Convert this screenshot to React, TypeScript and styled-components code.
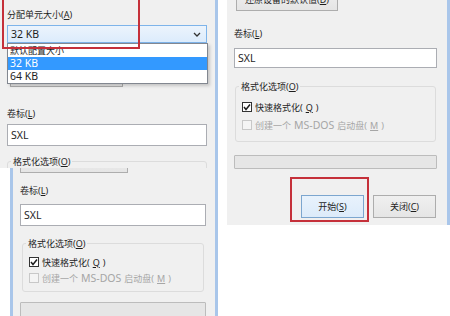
import React from 'react';
import styled, { createGlobalStyle } from 'styled-components';

const GlobalStyle = createGlobalStyle`
  html, body {
    margin: 0;
    padding: 0;
    background: #ffffff;
  }
  body {
    font-family: "Noto Sans", "Noto Sans CJK SC", sans-serif;
    font-size: 9px;
    color: #1e1e1e;
  }
`;

const frame = '#a9c6ea';

const Canvas = styled.div`
  display: flex;
  align-items: flex-start;
  width: 450px;
  height: 316px;
  overflow: hidden;
  background: #ffffff;
`;

const LeftColumn = styled.div`
  display: flex;
  flex-direction: column;
  width: 218px;
  height: 316px;
`;

const Pane = styled.div`
  position: relative;
  display: flex;
  flex-direction: column;
  box-sizing: border-box;
  overflow: hidden;
  background: #f0f0f0;

  & > * {
    flex-shrink: 0;
  }
`;

const TopPane = styled(Pane)`
  height: 168px;
  flex-shrink: 0;
  padding: 0 8px 0 7px;
  border-right: 3px solid ${frame};
`;

const LowerPane = styled(Pane)`
  flex: 1;
  margin-left: 10px;
  padding: 0 9px 0 7px;
  border-left: 3px solid ${frame};
  border-right: 3px solid ${frame};
`;

const RightPane = styled(Pane)`
  width: 223px;
  height: 225px;
  margin-left: 9px;
  padding: 0 10px 0 7px;
  border-right: 3px solid ${frame};
`;

/* Latin runs are drawn a little larger than the CJK ones, as in the dialog */
const Lat = styled.span`
  font-size: 10.5px;
`;

const Caption = styled.div<{ $mt: number }>`
  margin-top: ${p => p.$mt}px;
  line-height: 13px;
  white-space: nowrap;
`;

const Combo = styled.div<{ $mt: number }>`
  display: flex;
  align-items: center;
  justify-content: space-between;
  box-sizing: border-box;
  height: 18px;
  margin-top: ${p => p.$mt}px;
  padding: 0 5px 0 3px;
  border: 1px solid #7eb4ea;
  background: linear-gradient(#ecf4fc, #dcecfc);
`;

const DropList = styled.ul`
  position: absolute;
  top: 43px;
  left: 7px;
  right: 7px;
  margin: 0;
  padding: 0;
  list-style: none;
  border: 1px solid #828790;
  background: #ffffff;
  box-shadow: 2px 2px 3px rgba(0, 0, 0, 0.18);
`;

const DropItem = styled.li<{ $active?: boolean }>`
  height: 13px;
  line-height: 13px;
  padding-left: 2px;
  color: ${p => (p.$active ? '#ffffff' : '#1e1e1e')};
  background: ${p => (p.$active ? '#3399ff' : 'transparent')};
`;

const PushButton = styled.div<{ $mt?: number; $ml?: number; $w: number; $primary?: boolean }>`
  display: flex;
  align-items: center;
  justify-content: center;
  box-sizing: border-box;
  flex-shrink: 0;
  width: ${p => p.$w}px;
  height: 23px;
  margin-top: ${p => p.$mt ?? 0}px;
  margin-left: ${p => p.$ml ?? 0}px;
  border: 1px solid ${p => (p.$primary ? '#7ca6cf' : '#adadad')};
  background: ${p => (p.$primary ? 'linear-gradient(#e8f2fc, #dcebfa)' : 'linear-gradient(#f0f0f0, #e5e5e5)')};
  white-space: nowrap;
`;

const TextField = styled.div<{ $mt: number; $h: number }>`
  display: flex;
  align-items: center;
  box-sizing: border-box;
  height: ${p => p.$h}px;
  margin-top: ${p => p.$mt}px;
  padding-left: 3px;
  border: 1px solid #abadb3;
  background: #ffffff;
`;

const Group = styled.fieldset<{ $mt: number; $inset?: number; $gap: number; $pt: number; $pb: number }>`
  display: flex;
  flex-direction: column;
  gap: ${p => p.$gap}px;
  margin: ${p => p.$mt}px ${p => p.$inset ?? 0}px 0;
  padding: ${p => p.$pt}px 6px ${p => p.$pb}px;
  border: 1px solid #dcdcdc;
  border-radius: 3px;
  min-width: 0;
`;

const Legend = styled.legend`
  margin-left: -3px;
  padding: 0 2px;
  line-height: 13px;
  white-space: nowrap;
`;

const CheckRow = styled.div<{ $off?: boolean }>`
  display: flex;
  align-items: center;
  gap: 3px;
  height: 14px;
  white-space: nowrap;
  color: ${p => (p.$off ? '#a6a6a6' : '#1e1e1e')};
`;

const Box = styled.span<{ $off?: boolean }>`
  display: flex;
  align-items: center;
  justify-content: center;
  box-sizing: border-box;
  width: 10px;
  height: 10px;
  border: 1px solid ${p => (p.$off ? '#c8c8c8' : '#333333')};
  background: ${p => (p.$off ? '#f4f4f4' : '#ffffff')};
`;

const Progress = styled.div<{ $mt: number; $h: number }>`
  height: ${p => p.$h}px;
  margin-top: ${p => p.$mt}px;
  border: 1px solid #bcbcbc;
  border-radius: 1px;
  background: #e6e6e6;
`;

const ButtonRow = styled.div<{ $mt: number }>`
  display: flex;
  justify-content: flex-end;
  gap: 9px;
  margin-top: ${p => p.$mt}px;
  padding-right: 1px;
`;

const Spot = styled.div<{ $x: number; $y: number; $w: number; $h: number }>`
  position: absolute;
  left: ${p => p.$x}px;
  top: ${p => p.$y}px;
  width: ${p => p.$w}px;
  height: ${p => p.$h}px;
  box-sizing: border-box;
  border: 2px solid #c5303a;
  pointer-events: none;
`;

function Chevron() {
  return (
    <svg width="8" height="5" viewBox="0 0 8 5">
      <polyline points="1,1 4,4 7,1" fill="none" stroke="#333" strokeWidth="1.3" />
    </svg>
  );
}

function Tick() {
  return (
    <svg width="8" height="8" viewBox="0 0 8 8">
      <polyline points="1,4 3,6.5 7,1.5" fill="none" stroke="#1e1e1e" strokeWidth="1.5" />
    </svg>
  );
}

interface OptionsProps {
  mt: number;
  inset?: number;
  gap?: number;
  pt?: number;
  pb?: number;
}

function Options({ mt, inset, gap = 4, pt = 7, pb = 9 }: OptionsProps) {
  return (
    <Group $mt={mt} $inset={inset} $gap={gap} $pt={pt} $pb={pb}>
      <Legend>格式化选项(<u>O</u>)</Legend>
      <CheckRow>
        <Box><Tick /></Box>
        快速格式化(<u>Q</u>)
      </CheckRow>
      <CheckRow $off>
        <Box $off />
        创建一个 <Lat>MS-DOS</Lat> 启动盘(<u>M</u>)
      </CheckRow>
    </Group>
  );
}

export default function App() {
  return (
    <Canvas>
      <GlobalStyle />
      <LeftColumn>
        <TopPane>
          <Caption $mt={8}>分配单元大小(<u>A</u>)</Caption>
          <Combo $mt={4}>
            <Lat>32 KB</Lat>
            <Chevron />
          </Combo>
          <PushButton $mt={21} $ml={3} $w={113}>还原设备的默认值(<u>D</u>)</PushButton>
          <Caption $mt={20}>卷标(<u>L</u>)</Caption>
          <TextField $mt={4} $h={22}><Lat>SXL</Lat></TextField>
          <Options mt={9} />
          <DropList>
            <DropItem>默认配置大小</DropItem>
            <DropItem $active><Lat>32 KB</Lat></DropItem>
            <DropItem><Lat>64 KB</Lat></DropItem>
          </DropList>
          <Spot $x={2} $y={-2} $w={138} $h={51} />
        </TopPane>
        <LowerPane>
          <PushButton $mt={-18} $w={108}>还原设备的默认值(<u>D</u>)</PushButton>
          <Caption $mt={11}>卷标(<u>L</u>)</Caption>
          <TextField $mt={7} $h={22}><Lat>SXL</Lat></TextField>
          <Options mt={11} inset={2} gap={2} pt={5} pb={6} />
          <Progress $mt={10} $h={16} />
        </LowerPane>
      </LeftColumn>
      <RightPane>
        <PushButton $mt={-12} $ml={2} $w={102}>还原设备的默认值(<u>D</u>)</PushButton>
        <Caption $mt={16}>卷标(<u>L</u>)</Caption>
        <TextField $mt={8} $h={20}><Lat>SXL</Lat></TextField>
        <Options mt={12} inset={1} />
        <Progress $mt={13} $h={12} />
        <ButtonRow $mt={26}>
          <PushButton $w={63} $primary>开始(<u>S</u>)</PushButton>
          <PushButton $w={63}>关闭(<u>C</u>)</PushButton>
        </ButtonRow>
        <Spot $x={63} $y={177} $w={79} $h={45} />
      </RightPane>
    </Canvas>
  );
}
